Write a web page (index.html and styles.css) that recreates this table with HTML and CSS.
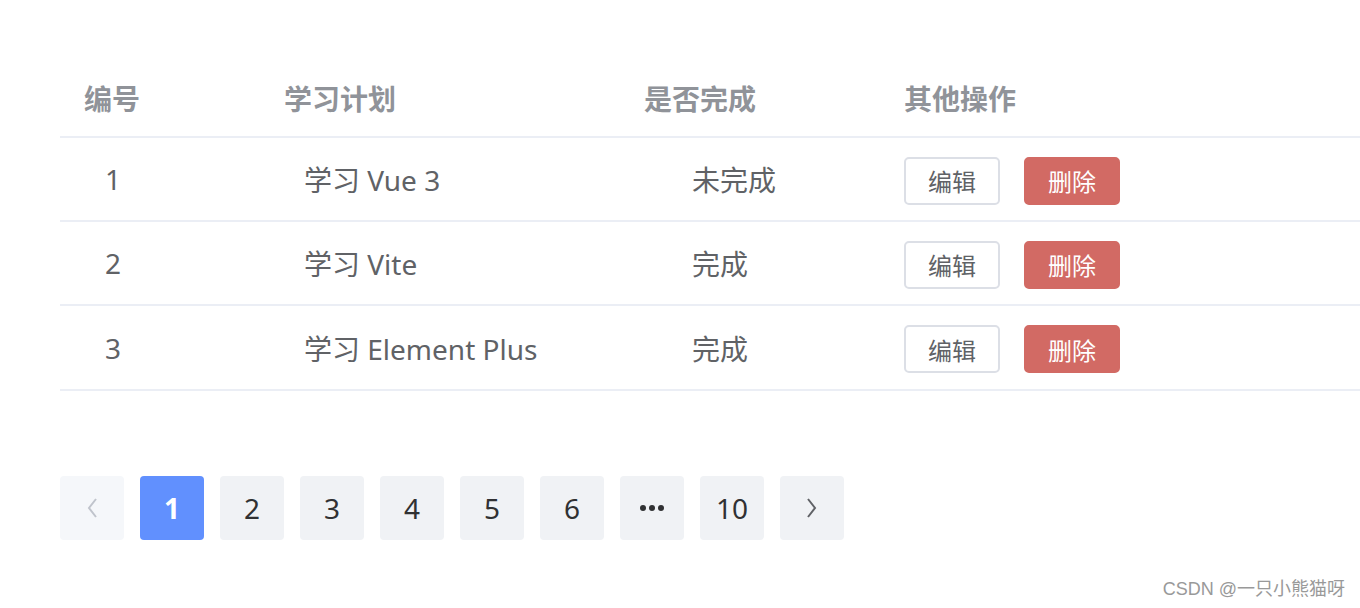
FILE: index.html
```html
<!DOCTYPE html>
<html lang="zh-CN">
<head>
<meta charset="utf-8">
<title>学习计划</title>
<link rel="stylesheet" href="styles.css">
</head>
<body>
<div class="page">
  <div class="table">
    <div class="row head">
      <div class="cell c1">编号</div>
      <div class="cell c2">学习计划</div>
      <div class="cell c3">是否完成</div>
      <div class="cell c4">其他操作</div>
    </div>
    <div class="row">
      <div class="cell c1 b1">1</div>
      <div class="cell c2 b2">学习 Vue 3</div>
      <div class="cell c3 b3">未完成</div>
      <div class="cell c4 ops"><button class="btn">编辑</button><button class="btn danger">删除</button></div>
    </div>
    <div class="row">
      <div class="cell c1 b1">2</div>
      <div class="cell c2 b2">学习 Vite</div>
      <div class="cell c3 b3">完成</div>
      <div class="cell c4 ops"><button class="btn">编辑</button><button class="btn danger">删除</button></div>
    </div>
    <div class="row last">
      <div class="cell c1 b1">3</div>
      <div class="cell c2 b2">学习 Element Plus</div>
      <div class="cell c3 b3">完成</div>
      <div class="cell c4 ops"><button class="btn">编辑</button><button class="btn danger">删除</button></div>
    </div>
  </div>

  <div class="pager">
    <span class="pg disabled"><svg width="12" height="22" viewBox="0 0 12 22"><path d="M10 2 L3 11 L10 20" fill="none" stroke="#c0c4cc" stroke-width="2"/></svg></span>
    <span class="pg active">1</span>
    <span class="pg">2</span>
    <span class="pg">3</span>
    <span class="pg">4</span>
    <span class="pg">5</span>
    <span class="pg">6</span>
    <span class="pg"><svg width="24" height="6" viewBox="0 0 24 6"><circle cx="3" cy="3" r="3" fill="#303133"/><circle cx="12" cy="3" r="3" fill="#303133"/><circle cx="21" cy="3" r="3" fill="#303133"/></svg></span>
    <span class="pg">10</span>
    <span class="pg"><svg width="12" height="22" viewBox="0 0 12 22"><path d="M2 2 L9 11 L2 20" fill="none" stroke="#606266" stroke-width="2"/></svg></span>
  </div>
</div>
<div class="mark">CSDN @一只小熊猫呀</div>
</body>
</html>
```

FILE: styles.css
```css
html, body {
  margin: 0;
  padding: 0;
  background: #ffffff;
}
body {
  font-family: "Noto Sans", "Noto Sans CJK SC", sans-serif;
  width: 1360px;
  height: 608px;
  overflow: hidden;
  position: relative;
}
.page {
  padding: 60px 0 0 60px;
}
.table {
  display: flex;
  flex-direction: column;
}
.row {
  display: grid;
  grid-template-columns: 200px 360px 260px 1fr;
  height: 82px;
  align-items: center;
  border-bottom: 2px solid #ebeef5;
  font-size: 28px;
  color: #606266;
}
.row.head {
  height: 76px;
  font-weight: bold;
  color: #909399;
  font-size: 28px;
}
.row .ops {
  padding-top: 3px;
}
.row.last {
  height: 83px;
}
.cell {
  padding-left: 24px;
  white-space: nowrap;
}
.cell.b1 { padding-left: 45px; }
.cell.b2 { padding-left: 44px; }
.cell.b3 { padding-left: 72px; }
.ops {
  display: flex;
  gap: 24px;
  align-items: center;
}
.btn {
  width: 96px;
  height: 48px;
  box-sizing: border-box;
  border: 2px solid #dcdfe6;
  border-radius: 5px;
  background: #ffffff;
  color: #606266;
  font-family: "Noto Sans CJK SC", sans-serif;
  font-size: 24px;
  padding: 0;
  display: flex;
  align-items: center;
  justify-content: center;
}
.btn.danger {
  background: #d26a64;
  border-color: #d26a64;
  color: #ffffff;
}
.pager {
  margin-top: 85px;
  display: flex;
  gap: 16px;
}
.pg {
  width: 64px;
  height: 64px;
  border-radius: 4px;
  background: #f0f2f5;
  color: #303133;
  font-size: 28px;
  display: flex;
  align-items: center;
  justify-content: center;
}
.pg.disabled {
  background: #f5f7fa;
}
.pg.active {
  background: #6190fe;
  color: #ffffff;
  font-weight: bold;
}
.mark {
  position: absolute;
  right: 15px;
  bottom: 8px;
  font-family: "Liberation Sans", "Noto Sans CJK SC", sans-serif;
  font-size: 18px;
  color: #999999;
  text-shadow: 1px 1px 0 #ffffff;
}
```
